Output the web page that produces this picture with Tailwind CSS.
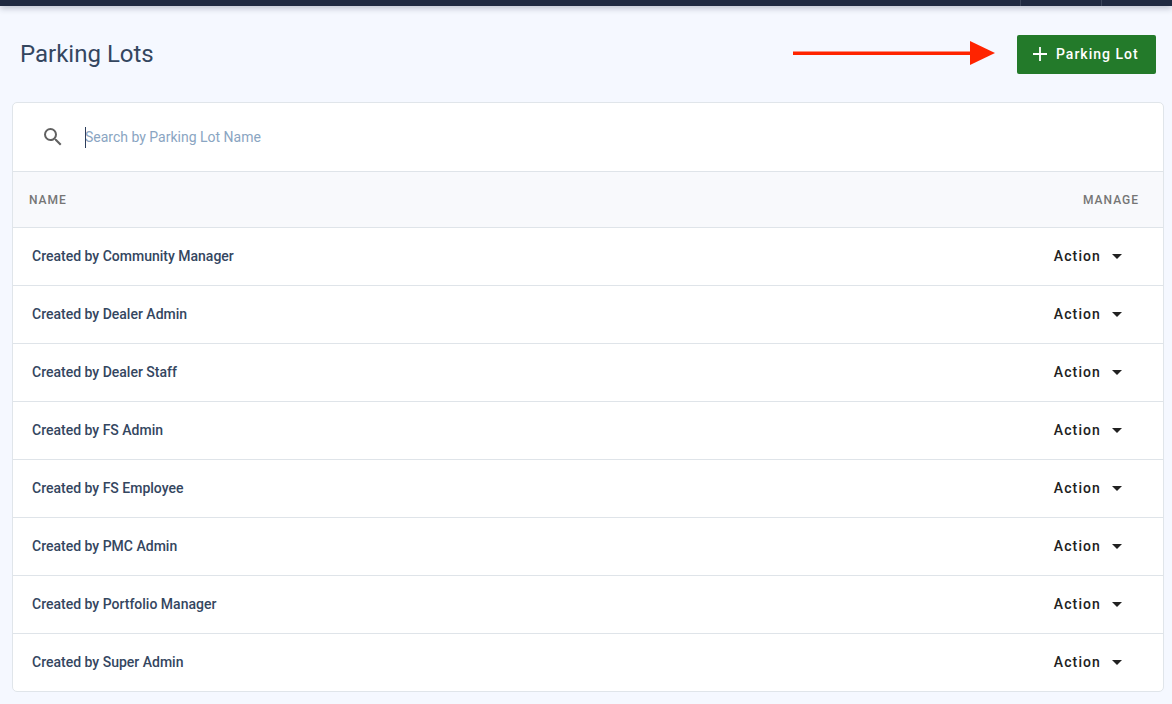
<!DOCTYPE html>
<html lang="en">
<head>
    <meta charset="UTF-8">
    <meta name="viewport" content="width=device-width, initial-scale=1.0">
    <title>Parking Lots</title>
    <script src="https://cdn.jsdelivr.net/npm/@tailwindcss/browser@4"></script>
</head>
<body class="bg-[#f5f8ff] font-['Roboto',sans-serif] h-[704px] overflow-hidden">
    <!-- top nav, only its lower edge is in view -->
    <div class="h-[6px] bg-[#1f2a40] shadow-[0_2px_6px_rgba(31,42,64,0.3)] flex justify-end">
        <div class="w-[81px] border-l border-[#3a4559]"></div>
        <div class="w-[71px] border-l border-[#3a4559]"></div>
    </div>

    <header class="relative h-[96px] flex items-center justify-between pl-5 pr-4">
        <h1 class="text-[24px] leading-8 text-[#34465f]">Parking Lots</h1>

        <!-- annotation arrow -->
        <svg class="absolute left-[793px] top-[35px]" width="202" height="24" viewBox="0 0 202 24">
            <rect x="0" y="10.5" width="178" height="3.5" fill="#ff2400"/>
            <polygon points="177,0 202,12 177,24" fill="#ff2400"/>
        </svg>

        <button class="w-[139px] h-[39px] flex items-center pl-[15px] gap-[8px] bg-[#237a2a] rounded-[2px] text-white text-[14px] font-medium tracking-[1px]">
            <svg width="16" height="16" viewBox="0 0 16 16" fill="none" stroke="white" stroke-width="1.8">
                <path d="M8 1v14M1 8h14"/>
            </svg>
            Parking Lot
        </button>
    </header>

    <main class="ml-3 mr-2 bg-white border border-[#e0e5ea] rounded-[5px] overflow-hidden">
        <div class="h-[68px] flex items-center pl-[28px]">
            <svg width="24" height="24" viewBox="0 0 24 24" fill="#616161">
                <path d="M15.5 14h-.79l-.28-.27A6.47 6.47 0 0 0 16 9.5 6.5 6.5 0 1 0 9.5 16c1.61 0 3.09-.59 4.23-1.57l.27.28v.79l5 4.99L20.49 19l-4.99-5zm-6 0C7.01 14 5 11.99 5 9.5S7.01 5 9.5 5 14 7.01 14 9.5 11.99 14 9.5 14z"/>
            </svg>
            <div class="ml-[20px] relative flex items-center">
                <span class="absolute left-0 w-px h-[21px] bg-[#2c3e5c]"></span>
                <span class="text-[14px] text-[#8aa5c2]">Search by Parking Lot Name</span>
            </div>
        </div>

        <div class="h-[57px] bg-[#f8f9fc] border-y border-[#dfe4e9] flex items-center justify-between pl-4 pr-6 text-[12px] font-medium text-[#757575] tracking-[1px]">
            <span>NAME</span>
            <span>MANAGE</span>
        </div>

        <div class="divide-y divide-[#dfe4e9]">
            <div class="h-[58px] flex items-center justify-between pl-[19px] pr-[41px]">
                <span class="text-[14px] font-medium text-[#34465f]">Created by Community Manager</span>
                <span class="flex items-center gap-[11px] text-[14px] font-medium tracking-[1.1px] text-[#212121]">Action <i class="border-x-[5px] border-t-[5px] border-x-transparent border-t-[#212121]"></i></span>
            </div>
            <div class="h-[58px] flex items-center justify-between pl-[19px] pr-[41px]">
                <span class="text-[14px] font-medium text-[#34465f]">Created by Dealer Admin</span>
                <span class="flex items-center gap-[11px] text-[14px] font-medium tracking-[1.1px] text-[#212121]">Action <i class="border-x-[5px] border-t-[5px] border-x-transparent border-t-[#212121]"></i></span>
            </div>
            <div class="h-[58px] flex items-center justify-between pl-[19px] pr-[41px]">
                <span class="text-[14px] font-medium text-[#34465f]">Created by Dealer Staff</span>
                <span class="flex items-center gap-[11px] text-[14px] font-medium tracking-[1.1px] text-[#212121]">Action <i class="border-x-[5px] border-t-[5px] border-x-transparent border-t-[#212121]"></i></span>
            </div>
            <div class="h-[58px] flex items-center justify-between pl-[19px] pr-[41px]">
                <span class="text-[14px] font-medium text-[#34465f]">Created by FS Admin</span>
                <span class="flex items-center gap-[11px] text-[14px] font-medium tracking-[1.1px] text-[#212121]">Action <i class="border-x-[5px] border-t-[5px] border-x-transparent border-t-[#212121]"></i></span>
            </div>
            <div class="h-[58px] flex items-center justify-between pl-[19px] pr-[41px]">
                <span class="text-[14px] font-medium text-[#34465f]">Created by FS Employee</span>
                <span class="flex items-center gap-[11px] text-[14px] font-medium tracking-[1.1px] text-[#212121]">Action <i class="border-x-[5px] border-t-[5px] border-x-transparent border-t-[#212121]"></i></span>
            </div>
            <div class="h-[58px] flex items-center justify-between pl-[19px] pr-[41px]">
                <span class="text-[14px] font-medium text-[#34465f]">Created by PMC Admin</span>
                <span class="flex items-center gap-[11px] text-[14px] font-medium tracking-[1.1px] text-[#212121]">Action <i class="border-x-[5px] border-t-[5px] border-x-transparent border-t-[#212121]"></i></span>
            </div>
            <div class="h-[58px] flex items-center justify-between pl-[19px] pr-[41px]">
                <span class="text-[14px] font-medium text-[#34465f]">Created by Portfolio Manager</span>
                <span class="flex items-center gap-[11px] text-[14px] font-medium tracking-[1.1px] text-[#212121]">Action <i class="border-x-[5px] border-t-[5px] border-x-transparent border-t-[#212121]"></i></span>
            </div>
            <div class="h-[57px] flex items-center justify-between pl-[19px] pr-[41px]">
                <span class="text-[14px] font-medium text-[#34465f]">Created by Super Admin</span>
                <span class="flex items-center gap-[11px] text-[14px] font-medium tracking-[1.1px] text-[#212121]">Action <i class="border-x-[5px] border-t-[5px] border-x-transparent border-t-[#212121]"></i></span>
            </div>
        </div>
    </main>
</body>
</html>
